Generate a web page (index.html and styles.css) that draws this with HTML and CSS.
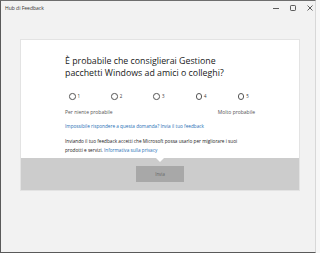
FILE: index.html
```
<!DOCTYPE html>
<html lang="it">
<head>
    <meta charset="UTF-8">
    <title>Hub di Feedback</title>
    <link rel="stylesheet" href="styles.css">
</head>
<body>
    <div class="finestra">
        <div class="barra-titolo">
            <span class="titolo">Hub di Feedback</span>
            <div class="comandi">
                <svg class="cmd" width="8" height="8" viewBox="0 0 8 8"><path d="M1 4.5h6" stroke="#333" stroke-width="0.8"/></svg>
                <svg class="cmd" width="8" height="8" viewBox="0 0 8 8"><rect x="1.5" y="1.5" width="5" height="5" rx="0.8" fill="none" stroke="#333" stroke-width="0.8"/></svg>
                <svg class="cmd" width="8" height="8" viewBox="0 0 8 8"><path d="M1.5 1.5l5 5M6.5 1.5l-5 5" stroke="#333" stroke-width="0.8"/></svg>
            </div>
        </div>

        <div class="scheda">
            <div class="contenuto">
                <h1 class="domanda">È probabile che consiglierai Gestione pacchetti Windows ad amici o colleghi?</h1>

                <div class="scala">
                    <label class="voce"><span class="cerchio"></span>1</label>
                    <label class="voce"><span class="cerchio"></span>2</label>
                    <label class="voce"><span class="cerchio"></span>3</label>
                    <label class="voce"><span class="cerchio"></span>4</label>
                    <label class="voce"><span class="cerchio"></span>5</label>
                </div>
                <div class="estremi">
                    <span>Per niente probabile</span>
                    <span>Molto probabile</span>
                </div>

                <a class="link salta">Impossibile rispondere a questa domanda? Invia il tuo feedback</a>

                <p class="nota">Inviando il tuo feedback accetti che Microsoft possa usarlo per migliorare i suoi prodotti e servizi. <a class="link">Informativa sulla privacy</a></p>
            </div>
            <div class="piede">
                <button class="invia">Invia</button>
            </div>
        </div>
    </div>
</body>
</html>
```

FILE: styles.css
```
* {
    box-sizing: border-box;
}

body {
    margin: 0;
    background: #f7f7f7;
    font-family: "Segoe UI", "Open Sans", sans-serif;
    color: #1a1a1a;
}

.finestra {
    width: 316px;
    height: 253px;
    background: #f2f2f2;
    border-top: 1px solid #6e6e6e;
    border-left: 1px solid #5a5a5a;
    border-bottom: 1px solid #5a5a5a;
    border-right: 1px solid #d8d8d8;
    display: flex;
    flex-direction: column;
}

.barra-titolo {
    height: 13px;
    display: flex;
    align-items: center;
    justify-content: space-between;
    padding: 0 1px 0 4px;
}

.titolo {
    font-size: 5px;
    color: #333;
}

.comandi {
    display: flex;
    gap: 9px;
}

.cmd {
    display: block;
}

.scheda {
    margin: 25px 15px 0 19px;
    background: #fff;
    border: 1px solid #e3e3e3;
}

.contenuto {
    padding: 15px 44px 3.5px 44px;
}

.domanda {
    margin: 0;
    font-size: 8.8px;
    font-weight: normal;
    line-height: 12px;
    color: #1a1a1a;
}

.scala {
    display: flex;
    margin-top: 14px;
    padding-left: 4px;
}

.voce {
    flex: 0 0 42.2px;
    display: flex;
    align-items: center;
    gap: 2px;
    font-size: 4.4px;
    line-height: 7px;
    color: #333;
}

.cerchio {
    width: 6.5px;
    height: 6.5px;
    border: 0.7px solid #555;
    border-radius: 50%;
}

.estremi {
    display: flex;
    justify-content: space-between;
    margin-top: 9px;
    font-size: 5px;
    line-height: 6px;
    color: #555;
}

.link {
    color: #1f6fb5;
}

.salta {
    display: block;
    margin-top: 8px;
    font-size: 4.7px;
    line-height: 6px;
}

.nota {
    margin: 8px 0 0;
    font-size: 4.7px;
    line-height: 8.5px;
    color: #222;
}

.piede {
    position: relative;
    height: 32px;
    background: #cccccc;
    display: flex;
    justify-content: center;
    align-items: center;
}

.piede::before {
    content: "";
    position: absolute;
    top: 0;
    left: 50%;
    margin-left: -4px;
    border-left: 4px solid transparent;
    border-right: 4px solid transparent;
    border-top: 4px solid #fff;
}

.invia {
    width: 48px;
    height: 16px;
    border: none;
    background: #a8a8a8;
    color: #666;
    font-family: inherit;
    font-size: 4.4px;
    padding: 0;
}
```
